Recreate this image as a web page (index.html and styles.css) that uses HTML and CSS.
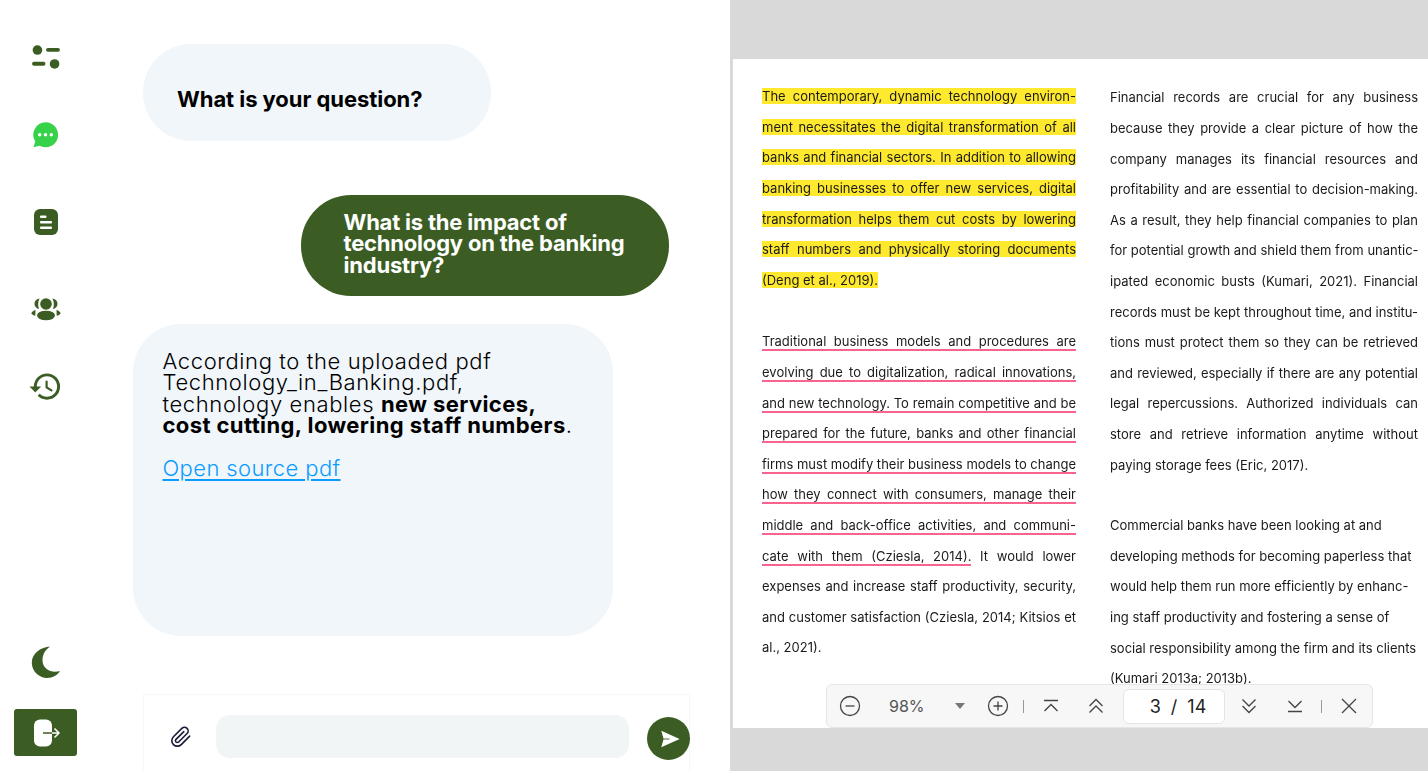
FILE: index.html
```html
<!DOCTYPE html>
<html lang="en">
<head>
<meta charset="utf-8">
<title>Chat with PDF</title>
<link rel="stylesheet" href="styles.css">
</head>
<body>
<div class="app">
  <aside class="sidebar">
    <nav class="nav">
      <svg class="icon i-filter" viewBox="0 0 28 24"><circle cx="6" cy="5.500" r="4.500"/><rect x="14" y="3.500" width="13" height="3.600" rx="1.800"/><rect x="1" y="16.500" width="12.500" height="3.600" rx="1.800"/><circle cx="22" cy="18.500" r="4.500"/></svg>
      <svg class="icon i-chat" viewBox="0 0 28 28"><path class="green" d="M14 .8a13 13 0 1 1-6.200 24.400L1.500 26.600 3.400 20.800A13 13 0 0 1 14 .8z"/><circle class="wh" cx="8" cy="13.800" r="1.800"/><circle class="wh" cx="14" cy="13.800" r="1.800"/><circle class="wh" cx="20" cy="13.800" r="1.800"/></svg>
      <svg class="icon i-doc" viewBox="0 0 28 28"><rect x="2" y="1" width="24" height="26" rx="6"/><rect class="wh" x="8" y="7.500" width="6.500" height="2.400" rx="1"/><rect class="wh" x="8" y="13" width="12" height="2.400" rx="1"/><rect class="wh" x="8" y="18.500" width="12" height="2.400" rx="1"/></svg>
      <svg class="icon i-users" viewBox="0 0 30 24"><circle cx="15" cy="7" r="5.800"/><ellipse cx="15" cy="18.500" rx="9" ry="4.800"/><path d="M8.500 1.500C5 2 3.300 4.500 3.500 7.200 3.700 9.500 5.500 11.500 8 12 6.800 9 6.800 5 8.500 1.500zM21.500 1.500C25 2 26.700 4.500 26.500 7.200 26.300 9.500 24.500 11.500 22 12 23.200 9 23.200 5 21.500 1.500zM4.500 13C2.300 13.600.5 15 .3 16.500c1 1.300 2.300 2 4 2.300C4.200 16.700 4.600 14.800 4.500 13zM25.500 13c2.200.6 4 2 4.200 3.500-1 1.300-2.300 2-4 2.300.1-2.100-.3-4-.2-5.800z"/></svg>
      <svg class="icon i-history" viewBox="0 0 24 24"><path d="M13 3a9 9 0 0 0-9 9H1l3.890 3.890.07.14L9 12H6c0-3.870 3.130-7 7-7s7 3.130 7 7-3.130 7-7 7c-1.930 0-3.680-.790-4.940-2.060l-1.420 1.420A8.954 8.954 0 0 0 13 21a9 9 0 0 0 0-18zm-1 5v5l4.280 2.540.720-1.210-3.500-2.080V8H12z"/></svg>
    </nav>
    <div class="sidebar-bottom">
      <svg class="icon i-moon" viewBox="0 0 32 34"><path d="M20 1.500C11 2 2 8 1.800 17.500 1.600 26 9 33 17 33c6 0 10.500-3 13-7-9 2.500-17-2-17.500-10C12.200 10 15 5 20 1.500z"/></svg>
      <button class="logout" type="button" aria-label="Log out">
        <svg viewBox="0 0 30 30" class="logout-svg"><rect class="wh" x="3" y="1.500" width="18" height="27" rx="6"/><path class="arrow-in" d="M12 15h9"/><path class="arrow-out" d="M21 15h6M23.500 10.500L28 15l-4.500 4.500"/></svg>
      </button>
    </div>
  </aside>

  <main class="chat">
    <div class="messages">
      <div class="bubble q">What is your question?</div>
      <div class="bubble user">What is the impact of technology on the banking industry?</div>
      <div class="bubble answer">
        <p>According to the uploaded pdf Technology_in_Banking.pdf, technology enables <b>new services, cost cutting, lowering staff numbers</b>.</p>
        <a class="source" href="#">Open source pdf</a>
      </div>
    </div>
    <div class="composer">
      <svg class="clip" viewBox="0 0 24 24"><path d="M21.440 11.050l-9.190 9.190a6 6 0 0 1-8.490-8.490l9.190-9.190a4 4 0 0 1 5.660 5.660l-9.200 9.190a2 2 0 0 1-2.830-2.830l8.490-8.480"/></svg>
      <div class="field"></div>
      <button class="send" type="button" aria-label="Send">
        <svg viewBox="0 0 24 24"><path class="wh" d="M2.500 3l20 9-20 9 2.500-9z"/><path class="slit" d="M4.500 12h7"/></svg>
      </button>
    </div>
  </main>

  <section class="viewer">
    <div class="page">
      <div class="col">
        <div class="para">
          <div class="ln"><span class="hl">The contemporary, dynamic technology environ-</span></div>
          <div class="ln"><span class="hl">ment necessitates the digital transformation of all</span></div>
          <div class="ln"><span class="hl">banks and financial sectors. In addition to allowing</span></div>
          <div class="ln"><span class="hl">banking businesses to offer new services, digital</span></div>
          <div class="ln"><span class="hl">transformation helps them cut costs by lowering</span></div>
          <div class="ln"><span class="hl">staff numbers and physically storing documents</span></div>
          <div class="ln end"><span class="hl">(Deng et al., 2019).</span></div>
        </div>
        <div class="para">
          <div class="ln"><span class="ul">Traditional business models and procedures are</span></div>
          <div class="ln"><span class="ul">evolving due to digitalization, radical innovations,</span></div>
          <div class="ln"><span class="ul">and new technology. To remain competitive and be</span></div>
          <div class="ln"><span class="ul">prepared for the future, banks and other financial</span></div>
          <div class="ln"><span class="ul">firms must modify their business models to change</span></div>
          <div class="ln"><span class="ul">how they connect with consumers, manage their</span></div>
          <div class="ln"><span class="ul">middle and back-office activities, and communi-</span></div>
          <div class="ln"><span class="ul">cate with them (Cziesla, 2014).</span> It would lower</div>
          <div class="ln">expenses and increase staff productivity, security,</div>
          <div class="ln">and customer satisfaction (Cziesla, 2014; Kitsios et</div>
          <div class="ln end">al., 2021).</div>
        </div>
      </div>
      <div class="col right">
        <div class="para">
          <div class="ln">Financial records are crucial for any business</div>
          <div class="ln">because they provide a clear picture of how the</div>
          <div class="ln">company manages its financial resources and</div>
          <div class="ln">profitability and are essential to decision-making.</div>
          <div class="ln">As a result, they help financial companies to plan</div>
          <div class="ln">for potential growth and shield them from unantic-</div>
          <div class="ln">ipated economic busts (Kumari, 2021). Financial</div>
          <div class="ln">records must be kept throughout time, and institu-</div>
          <div class="ln">tions must protect them so they can be retrieved</div>
          <div class="ln">and reviewed, especially if there are any potential</div>
          <div class="ln">legal repercussions. Authorized individuals can</div>
          <div class="ln">store and retrieve information anytime without</div>
          <div class="ln end">paying storage fees (Eric, 2017).</div>
        </div>
        <div class="para">
          <div class="ln end">Commercial banks have been looking at and</div>
          <div class="ln end">developing methods for becoming paperless that</div>
          <div class="ln end">would help them run more efficiently by enhanc-</div>
          <div class="ln end">ing staff productivity and fostering a sense of</div>
          <div class="ln end">social responsibility among the firm and its clients</div>
          <div class="ln end">(Kumari 2013a; 2013b).</div>
        </div>
      </div>
    </div>
    <div class="toolbar">
      <svg class="tb" viewBox="0 0 22 22"><circle cx="11" cy="11" r="9.500"/><path d="M6.500 11h9"/></svg>
      <span class="zoom">98%</span>
      <span class="caret"></span>
      <svg class="tb" viewBox="0 0 22 22"><circle cx="11" cy="11" r="9.500"/><path d="M6.500 11h9M11 6.500v9"/></svg>
      <span class="sep"></span>
      <svg class="tb nav-a" viewBox="0 0 22 22"><path d="M4 5.500h14M4.500 16L11 9.500l6.500 6.500"/></svg>
      <svg class="tb nav-b" viewBox="0 0 22 22"><path d="M4.500 11L11 4.500 17.500 11M4.500 17.500L11 11l6.500 6.500"/></svg>
      <div class="pager"><span>3</span><span>/</span><span>14</span></div>
      <svg class="tb nav-c" viewBox="0 0 22 22"><path d="M4.500 4.500L11 11l6.500-6.500M4.500 11L11 17.500 17.500 11"/></svg>
      <svg class="tb nav-d" viewBox="0 0 22 22"><path d="M4.500 6L11 12.500 17.500 6M4 16.500h14"/></svg>
      <span class="sep sep2"></span>
      <svg class="tb close" viewBox="0 0 22 22"><path d="M4 4l14 14M18 4L4 18"/></svg>
    </div>
  </section>
</div>
</body>
</html>
```
FILE: styles.css
```css
* { box-sizing: border-box; }
html, body { margin: 0; height: 771px; overflow: hidden; background: #fff; }
body { font-family: Inter, "Liberation Sans", sans-serif; color: #000; }
svg { display: block; }

.app { display: flex; width: 1428px; height: 771px; }

/* sidebar */
.sidebar {
  width: 92px;
  flex: none;
  display: flex;
  flex-direction: column;
  justify-content: space-between;
  align-items: center;
  padding: 42px 0 15px;
}
.icon { fill: #3b5d23; }
.wh { fill: #fff; }
.green { fill: #36d24a; }
.nav { display: flex; flex-direction: column; align-items: center; }
.i-filter { width: 30px; height: 26px; margin-top: 2px; }
.i-chat { width: 27px; height: 28px; margin-top: 51px; margin-left: -1px; }
.i-doc { width: 28px; height: 28px; margin-top: 59px; }
.i-users { width: 30px; height: 24px; margin-top: 61px; }
.i-history { width: 35px; height: 35px; margin-top: 48px; margin-left: -2px; }

.sidebar-bottom { display: flex; flex-direction: column; align-items: center; margin-left: -1px; }
.i-moon { width: 32px; height: 34px; margin-bottom: 30px; margin-left: 1px; }
.logout {
  width: 63px;
  height: 47px;
  padding: 0;
  border: 0;
  border-radius: 3px;
  background: #3b5d23;
  display: flex;
  align-items: center;
  justify-content: center;
}
.logout-svg { width: 30px; height: 30px; }
.arrow-in { fill: none; stroke: #3b5d23; stroke-width: 1.500; }
.arrow-out { fill: none; stroke: #fff; stroke-width: 1.500; }

/* chat */
.chat {
  width: 638px;
  flex: none;
  display: flex;
  flex-direction: column;
  justify-content: space-between;
}
.messages { display: flex; flex-direction: column; padding-top: 44px; }
.bubble { font-size: 22px; line-height: 21.300px; }
.q {
  margin-left: 51px;
  width: 348px;
  height: 97px;
  padding: 45px 34px 0;
  border-radius: 48px;
  background: #f1f6fb;
  font-weight: 700;
  letter-spacing: -.06px;
}
.user {
  margin: 54px 0 0 209px;
  width: 368px;
  height: 101px;
  padding: 17px 30px 0 42.500px;
  border-radius: 50px;
  background: #3b5d23;
  color: #fff;
  font-weight: 700;
  letter-spacing: -.2px;
}
.answer {
  margin: 28px 0 0 41px;
  width: 480px;
  height: 312px;
  padding: 27px 30px 0 29.500px;
  border-radius: 48px;
  background: #f1f6fb;
  font-weight: 300;
  letter-spacing: .62px;
}
.answer p { margin: 0 0 22px; }
.answer b { font-weight: 700; letter-spacing: .4px; }
.source { color: #0a9cff; letter-spacing: .4px; text-decoration: underline; text-underline-offset: 3px; }

.composer {
  margin-left: 51px;
  width: 547px;
  height: 77px;
  border: 1px solid #f3f8f8;
  border-bottom: 0;
  display: flex;
  align-items: flex-start;
  padding-top: 20px;
}
.clip { width: 22px; height: 22px; flex: none; margin: 11px 24px 0 26px; fill: none; stroke: #1d1d3a; stroke-width: 1.800; stroke-linecap: round; stroke-linejoin: round; }
.field { width: 413px; height: 43px; flex: none; border-radius: 14px; background: #f1f5f6; }
.send {
  width: 43px;
  height: 43px;
  margin: 2px 0 0 18px;
  padding: 0;
  border: 0;
  border-radius: 50%;
  background: #3b5d23;
  display: flex;
  align-items: center;
  justify-content: center;
  flex: none;
}
.send svg { width: 22px; height: 22px; margin-left: 3px; }
.slit { fill: none; stroke: #3b5d23; stroke-width: 1; }

/* pdf viewer */
.viewer {
  position: relative;
  flex: 1;
  background: #d9d9d9;
  padding: 59px 0 43px 3px;
}
.page {
  height: 669px;
  background: #fff;
  padding: 22.300px 10px 0 29px;
  display: flex;
  gap: 34px;
  overflow: hidden;
  font-size: 13px;
  color: #1a1a1a;
  filter: blur(.3px);
}
.col { width: 314px; flex: none; }
.col.right { width: 308px; margin-top: 1.200px; }
.para { margin-bottom: 30.900px; }
.col.right .para { margin-bottom: 30.100px; }
.ln { line-height: 30.600px; height: 30.600px; text-align: justify; text-align-last: justify; white-space: nowrap; }
.ln.end { text-align-last: left; }
.hl { background: #ffe92e; }
.ul { border-bottom: 2px solid #f8648e; }

.toolbar {
  position: absolute;
  left: 96px;
  top: 684px;
  width: 547px;
  height: 44px;
  background: #f7f7f7;
  border: 1px solid #e6e6e6;
  border-radius: 6px;
  display: flex;
  align-items: center;
  padding-left: 12px;
  color: #333;
}
.tb { width: 22px; height: 22px; flex: none; fill: none; stroke: #444; stroke-width: 1.300; }
.zoom { width: 64px; margin-left: 28px; font-size: 16px; color: #555; flex: none; }
.caret { width: 0; height: 0; margin-right: 22px; border: 5px solid transparent; border-top: 6px solid #777; border-bottom: 0; margin-left: 2px; }
.sep { width: 1px; height: 13px; margin-left: 14px; background: #999; flex: none; }
.nav-a { margin-left: 16px; }
.nav-b { margin-left: 23px; }
.pager {
  width: 102px;
  height: 35px;
  margin-left: 16px;
  border: 1px solid #e4e4e4;
  border-radius: 6px;
  background: #fff;
  display: flex;
  justify-content: center;
  align-items: center;
  gap: 10px;
  font-size: 18px;
  color: #222;
  padding-left: 8px;
  flex: none;
}
.nav-c { margin-left: 13px; }
.nav-d { margin-left: 24px; }
.sep2 { margin-left: 15px; }
.close { margin-left: 16px; }
```
